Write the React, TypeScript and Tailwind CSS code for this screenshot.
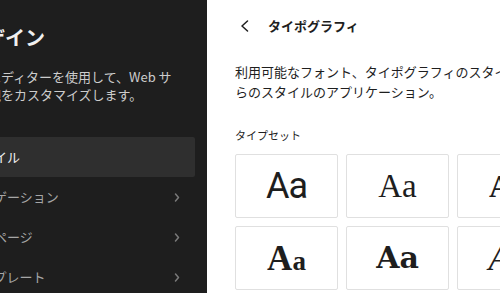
import { ReactNode } from "react";

const jp = "font-['Noto_Sans_CJK_JP',sans-serif]";

const Chevron = () => (
  <svg className="w-4 h-4 text-[#7a7a7a]" viewBox="0 0 16 16" fill="none" stroke="currentColor" strokeWidth="1.5" strokeLinecap="round" strokeLinejoin="round">
    <path d="M6.5 5 L9.5 8.5 L6.5 12" />
  </svg>
);

const MenuItem = ({ label, active }: { label: string; active?: boolean }) => (
  <div
    className={`flex items-center justify-between h-10 pl-[32px] pr-[10px] rounded-[2px] text-[13px] ${
      active ? "bg-[#2f2f2f] text-[#f0f0f0]" : "text-[#a6a6a6]"
    }`}
  >
    <span>{label}</span>
    {!active && <Chevron />}
  </div>
);

const Card = ({ children }: { children: ReactNode }) => (
  <div className="h-16 flex items-center justify-center border border-[#e0e0e0] rounded-[2px] text-[#1e1e1e] overflow-hidden">
    {children}
  </div>
);

export default function App() {
  return (
    <div className={`w-[500px] h-[293px] flex overflow-hidden ${jp}`}>
      <aside className="w-[207px] shrink-0 bg-[#1e1e1e] overflow-hidden">
        <div className="-ml-[64px] w-[259px] pt-[24px]">
          <h1 className="pl-[29px] text-[20px] leading-[28px] font-semibold text-[#f0f0f0] whitespace-nowrap">デザイン</h1>
          <p className="mt-4 text-[13px] leading-[18px] text-[#cccccc] whitespace-nowrap">
            ブロックエディターを使用して、Web サ
            <br />
            イトの外観をカスタマイズします。
          </p>
          <nav className="mt-[33px]">
            <MenuItem label="スタイル" active />
            <MenuItem label="ナビゲーション" />
            <MenuItem label="固定ページ" />
            <MenuItem label="テンプレート" />
          </nav>
        </div>
      </aside>
      <main className="flex-1 bg-white overflow-hidden pl-[28px] text-[#1e1e1e]">
        <div className="h-[52px] flex items-center">
          <svg className="w-3 h-3 ml-[4px]" viewBox="0 0 12 12" fill="none" stroke="#1e1e1e" strokeWidth="1.5" strokeLinecap="round" strokeLinejoin="round">
            <path d="M8.5 1 L3 6 L8.5 11" />
          </svg>
          <h2 className="ml-[17px] text-[13px] font-bold">タイポグラフィ</h2>
        </div>
        <p className="mt-[10px] text-[13px] leading-[20px] whitespace-nowrap">
          利用可能なフォント、タイポグラフィのスタイル、それ
          <br />
          らのスタイルのアプリケーション。
        </p>
        <div className="mt-[25px] text-[11px] leading-4">タイプセット</div>
        <div className="mt-[11px] grid grid-cols-[103px_103px_103px] gap-2 w-[325px]">
          <Card>
            <span className="font-['Roboto'] text-[36px] leading-none tracking-[-1px]">Aa</span>
          </Card>
          <Card>
            <span className="font-['Liberation_Serif'] text-[33px] leading-none">Aa</span>
          </Card>
          <Card>
            <span className="font-['Liberation_Serif'] font-bold text-[32px] leading-none">Aa</span>
          </Card>
          <Card>
            <span className="font-['Liberation_Serif'] font-bold leading-none">
              <span className="text-[35px]">A</span>
              <span className="text-[27px]">a</span>
            </span>
          </Card>
          <Card>
            <span className="font-['DejaVu_Serif'] font-bold text-[30px] leading-none">Aa</span>
          </Card>
          <Card>
            <span className="font-['Liberation_Serif'] italic text-[36px] leading-none">Aa</span>
          </Card>
        </div>
      </main>
    </div>
  );
}
